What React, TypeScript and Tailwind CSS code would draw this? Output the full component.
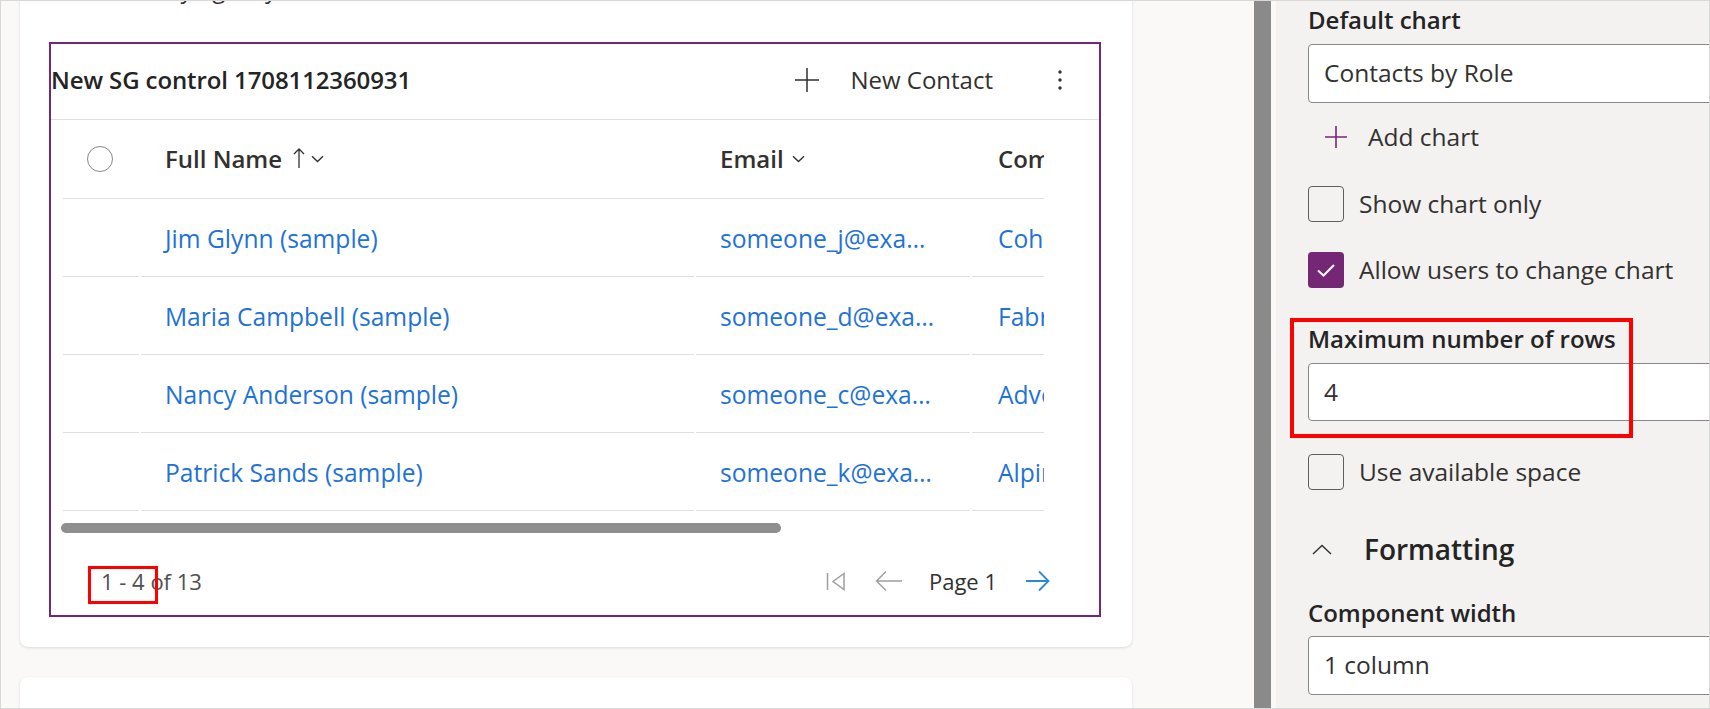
import React from 'react';

const FONT = { fontFamily: '"Open Sans", "Segoe UI", "Noto Sans", sans-serif' };

const rows = [
  { name: 'Jim Glynn (sample)', email: 'someone_j@exa…', company: 'Coho Winery (sample)' },
  { name: 'Maria Campbell (sample)', email: 'someone_d@exa…', company: 'Fabrikam, Inc. (sample)' },
  { name: 'Nancy Anderson (sample)', email: 'someone_c@exa…', company: 'Adventure Works (sample)' },
  { name: 'Patrick Sands (sample)', email: 'someone_k@exa…', company: 'Alpine Ski House (sample)' },
];

const ChevronDown = () => (
  <svg width="13" height="8" viewBox="0 0 13 8" fill="none" stroke="#323130" strokeWidth="1.4">
    <path d="M1 1.2 L6.5 6.5 L12 1.2" />
  </svg>
);

const SortUp = () => (
  <svg width="12" height="22" viewBox="0 0 12 22" fill="none" stroke="#323130" strokeWidth="1.3">
    <path d="M6 2 V21 M1 7 L6 2 L11 7" />
  </svg>
);

const Checkbox = ({ checked, label }: { checked?: boolean; label: string }) => (
  <div className="flex items-center gap-[15px]">
    {checked ? (
      <div className="w-[36px] h-[36px] rounded-[4px] bg-[#742774] flex items-center justify-center">
        <svg width="22" height="16" viewBox="0 0 22 16" fill="none" stroke="white" strokeWidth="2">
          <path d="M3 8.5 L8.5 13.5 L19 3" />
        </svg>
      </div>
    ) : (
      <div className="w-[36px] h-[36px] rounded-[4px] border border-[#605e5c]" />
    )}
    <span className="text-[24.5px] leading-[32px] text-[#323130]">{label}</span>
  </div>
);

export default function App() {
  return (
    <div
      className="w-[1710px] h-[709px] overflow-hidden flex border border-[#d8d8d8] bg-[#faf9f8]"
      style={FONT}
    >
      {/* canvas */}
      <div className="w-[1253px] shrink-0 flex flex-col pl-[19px] bg-[#faf9f8]">
        <div className="w-[1112px] -mt-[28px] bg-white rounded-lg shadow-[0_1px_3px_rgba(0,0,0,0.13)] shrink-0">
          <div className="h-[32px] leading-[32px] text-[24px] text-[#323130] pl-[42px]">Contacts by agency</div>
          <div className="mt-[37px] ml-[29px] w-[1052px] border-2 border-[#742774] pb-[15px]">
            {/* header */}
            <div className="h-[76px] border-b border-[#e1dfdd] flex items-center">
              <div className="-mt-[4px] text-[24px] font-semibold text-[#242424] leading-[32px] tracking-[-0.1px]">
                New SG control 1708112360931
              </div>
              <div className="-mt-[4px] ml-auto flex items-center pr-[36px]">
                <svg width="26" height="26" viewBox="0 0 26 26" fill="none" stroke="#323130" strokeWidth="1.5">
                  <path d="M13 1 V25 M1 13 H25" />
                </svg>
                <span className="ml-[30px] text-[24px] text-[#323130]">New Contact</span>
                <svg className="ml-[64px]" width="6" height="24" viewBox="0 0 6 24" fill="#323130">
                  <circle cx="3" cy="4" r="1.7" />
                  <circle cx="3" cy="12" r="1.7" />
                  <circle cx="3" cy="20" r="1.7" />
                </svg>
              </div>
            </div>
            {/* grid */}
            <div className="ml-[12px] w-[981px] overflow-hidden">
              <div className="w-[1300px]">
                <div className="h-[79px] flex items-center border-b border-[#e1dfdd] w-[981px]">
                  <div className="w-[78px] shrink-0 pl-[24px]">
                    <div className="w-[26px] h-[26px] rounded-full border-[1.5px] border-[#8a8886]" />
                  </div>
                  <div className="w-[555px] shrink-0 pl-[24px] flex items-center">
                    <span className="text-[24px] font-semibold text-[#323130]">Full Name</span>
                    <span className="ml-[11px] -mt-[2px]"><SortUp /></span>
                    <span className="ml-[6px]"><ChevronDown /></span>
                  </div>
                  <div className="w-[276px] shrink-0 pl-[24px] flex items-center">
                    <span className="text-[24px] font-semibold text-[#323130]">Email</span>
                    <span className="ml-[8px]"><ChevronDown /></span>
                  </div>
                  <div className="shrink-0 pl-[26px] text-[24px] font-semibold text-[#323130] whitespace-nowrap">Company Name</div>
                </div>
                {rows.map((r) => (
                  <div key={r.name} className="h-[78px] flex text-[24.6px] text-[#1f72d6]">
                    <div className="w-[78px] shrink-0 pr-[2px]">
                      <div className="h-full border-b border-[#e1dfdd]" />
                    </div>
                    <div className="w-[555px] shrink-0 pr-[2px]">
                      <div className="h-full border-b border-[#e1dfdd] pl-[24px] pt-[4px] flex items-center">{r.name}</div>
                    </div>
                    <div className="w-[276px] shrink-0 pr-[2px]">
                      <div className="h-full border-b border-[#e1dfdd] pl-[24px] pt-[4px] flex items-center whitespace-nowrap">{r.email}</div>
                    </div>
                    <div className="w-[300px] shrink-0">
                      <div className="h-full border-b border-[#e1dfdd] pl-[26px] pt-[4px] flex items-center whitespace-nowrap">{r.company}</div>
                    </div>
                  </div>
                ))}
              </div>
            </div>
            {/* scrollbar */}
            <div className="mt-[12px] ml-[10px] w-[720px] h-[10px] rounded-full bg-[#8f8f8f]" />
            {/* footer */}
            <div className="mt-[29px] h-[38px] flex items-center">
              <div className="relative ml-[37px]">
                <span className="text-[22px] text-[#505050] pl-[13px]">1 - 4 of 13</span>
                <div className="absolute left-0 top-[1px] w-[70px] h-[38px] border-[3px] border-[#ff0000]" />
              </div>
              <div className="ml-auto flex items-center pr-[49px]">
                <svg width="20" height="19" viewBox="0 0 20 19" fill="none" stroke="#a19f9d" strokeWidth="1.5">
                  <path d="M1.5 1 V18 M18 1.5 L7 9.5 L18 17.5 Z" />
                </svg>
                <svg className="ml-[29px]" width="28" height="22" viewBox="0 0 28 22" fill="none" stroke="#a19f9d" strokeWidth="1.5">
                  <path d="M27 11 H2 M11 1.5 L1.5 11 L11 20.5" />
                </svg>
                <span className="ml-[26px] text-[22px] text-[#323130]">Page 1</span>
                <svg className="ml-[28px]" width="25" height="22" viewBox="0 0 25 22" fill="none" stroke="#2b88d8" strokeWidth="1.8">
                  <path d="M1 11 H23.5 M14 1.5 L23.5 11 L14 20.5" />
                </svg>
              </div>
            </div>
          </div>
          <div className="h-[30px]" />
        </div>
        <div className="mt-[30px] w-[1112px] h-[60px] bg-white rounded-t-lg shadow-[0_1px_3px_rgba(0,0,0,0.13)]" />
      </div>

      {/* divider */}
      <div className="w-[17px] shrink-0 bg-[#8a8a8a]" />

      {/* properties panel */}
      <div className="flex-1 overflow-hidden bg-[#f3f2f1] border-l-[5px] border-[#faf9f8] pl-[32px] pt-[3px] text-[#323130]">
        <div className="w-[480px]">
          <div className="text-[24px] leading-[32px] font-semibold text-[#242424]">Default chart</div>
          <div className="mt-[8px] h-[59px] rounded-[4px] border border-[#8a8886] bg-white flex items-center pl-[15px] text-[24.5px]">
            Contacts by Role
          </div>
          <div className="h-[48px] mt-[10px] flex items-center pl-[16px]">
            <svg width="24" height="24" viewBox="0 0 24 24" fill="none" stroke="#742774" strokeWidth="1.6">
              <path d="M12 1 V23 M1 12 H23" />
            </svg>
            <span className="ml-[20px] text-[24.5px]">Add chart</span>
          </div>
          <div className="mt-[25px]">
            <Checkbox label="Show chart only" />
          </div>
          <div className="mt-[30px]">
            <Checkbox checked label="Allow users to change chart" />
          </div>
          <div className="relative">
            <div className="mt-[35px] text-[24px] leading-[32px] font-semibold text-[#242424]">Maximum number of rows</div>
            <div className="mt-[8px] h-[58px] rounded-[4px] border border-[#8a8886] bg-white flex items-center pl-[15px] text-[24.5px]">
              4
            </div>
            <div className="absolute -left-[18px] -top-[5px] w-[343px] h-[120px] border-[4px] border-[#ff0000]" />
          </div>
          <div className="mt-[33px]">
            <Checkbox label="Use available space" />
          </div>
          <div className="mt-[39px] h-[40px] flex items-center">
            <svg className="ml-[4px]" width="20" height="11" viewBox="0 0 20 11" fill="none" stroke="#323130" strokeWidth="1.4">
              <path d="M1 10 L10 1.5 L19 10" />
            </svg>
            <span className="ml-[32px] text-[28px] font-semibold text-[#242424]">Formatting</span>
          </div>
          <div className="mt-[28px] text-[24px] leading-[32px] font-semibold text-[#242424]">Component width</div>
          <div className="mt-[7px] h-[59px] rounded-[4px] border border-[#8a8886] bg-white flex items-center pl-[15px] text-[24.5px]">
            1 column
          </div>
        </div>
      </div>
    </div>
  );
}
